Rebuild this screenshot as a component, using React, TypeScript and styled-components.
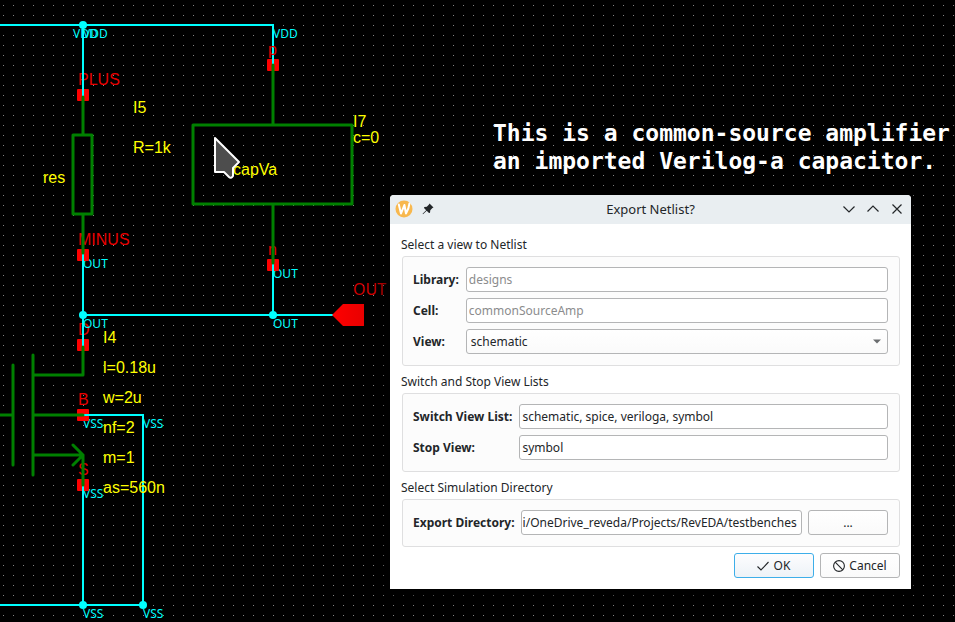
import React from "react";
import styled, { createGlobalStyle } from "styled-components";

const GlobalStyle = createGlobalStyle`
  * { box-sizing: border-box; }
  body { margin: 0; background: #000; overflow: hidden; }
`;

const Workspace = styled.main`
  position: relative;
  min-height: 100vh;
  overflow: hidden;
  background: #000;
`;

const Canvas = styled.svg`
  position: absolute;
  inset: 0;
  width: 100%;
  height: 100%;
`;

const NetLabel = styled.text`
  font: 12px "Noto Sans", sans-serif;
  fill: #00ffff;
`;

const PinLabel = styled.text<{ $port?: boolean }>`
  font: 16px ${(p) => (p.$port ? '"Noto Sans"' : '"Liberation Sans"')}, sans-serif;
  fill: ${(p) => (p.$port ? "#d00000" : "#e80000")};
`;

const PartLabel = styled.text`
  font: 16px "Liberation Sans", sans-serif;
  fill: #ffff00;
`;

const Note = styled.p`
  position: absolute;
  left: 493px;
  top: 119px;
  margin: 0;
  color: #fff;
  font: bold 23px/28px "DejaVu Sans Mono", monospace;
  white-space: pre;
`;

const Dialog = styled.section`
  position: absolute;
  left: 390px;
  right: 44px;
  top: 195px;
  background: #fff;
  border-radius: 4px 4px 0 0;
  box-shadow: 0 3px 14px 4px rgba(0, 0, 0, 0.7);
  color: #232629;
  font: 12px/18px "Noto Sans", sans-serif;
`;

const TitleBar = styled.header`
  display: grid;
  grid-template-columns: 1fr auto 1fr;
  align-items: center;
  height: 29px;
  padding: 0 5px 2px;
  background: #e9eef1;
  border-radius: 4px 4px 0 0;
`;

const Title = styled.h1`
  margin: 0;
  font-size: 13px;
  line-height: 18px;
  font-weight: 400;
`;

const TitleActions = styled.div<{ $end?: boolean }>`
  display: flex;
  align-items: center;
  justify-content: ${(p) => (p.$end ? "flex-end" : "flex-start")};
  gap: ${(p) => (p.$end ? 6 : 9)}px;
`;

const IconButton = styled.button`
  display: flex;
  padding: 0;
  border: 0;
  background: none;
  color: #232629;
`;

const Body = styled.form`
  display: flex;
  flex-direction: column;
  gap: 6px;
  padding: 11px;
`;

const GroupTitle = styled.h2`
  margin: 0;
  padding: 1px 0 2px;
  font-size: 12px;
  line-height: 18px;
  font-weight: 400;
`;

const GroupBox = styled.div<{ $browse?: boolean }>`
  display: grid;
  grid-template-columns: ${(p) => (p.$browse ? "auto 1fr 80px" : "auto 1fr")};
  gap: 6px ${(p) => (p.$browse ? 6 : 7)}px;
  align-items: center;
  margin-left: 1px;
  padding: 10px 11px 11px 10px;
  border: 1px solid #dfdfe0;
  border-radius: 3px;
  background: #fcfcfc;
`;

const Label = styled.label`
  font-weight: 700;
`;

const TextField = styled.input<{ $tight?: boolean }>`
  width: 100%;
  min-width: 0;
  height: 25px;
  padding: 0 ${(p) => (p.$tight ? 1 : 2)}px;
  border: 1px solid #b4b5b6;
  border-radius: 3px;
  background: #fff;
  color: #232629;
  font: inherit;
  outline: none;
  &:disabled { color: #8b8c8d; }
`;

const SelectWrap = styled.div`
  display: grid;
  align-items: center;
  & > * { grid-area: 1 / 1; }
  & > svg { justify-self: end; margin-right: 7px; pointer-events: none; }
`;

const Select = styled.select`
  appearance: none;
  width: 100%;
  height: 25px;
  padding: 0 4px;
  border: 1px solid #b4b5b6;
  border-radius: 3px;
  background: linear-gradient(#fff, #fafafa);
  color: #232629;
  font: inherit;
`;

const Button = styled.button<{ $primary?: boolean }>`
  display: flex;
  align-items: center;
  justify-content: center;
  gap: 4px;
  width: 80px;
  height: 25px;
  padding: 0 ${(p) => (p.$primary ? 2 : 0)}px 0 0;
  border: 1px solid ${(p) => (p.$primary ? "#3daee9" : "#b4b5b6")};
  border-radius: 3px;
  background: ${(p) => (p.$primary ? "linear-gradient(#fdfdfe, #edf2f7)" : "linear-gradient(#fff, #fafafa)")};
  color: #232629;
  font: inherit;
`;

const Actions = styled.footer`
  display: flex;
  justify-content: flex-end;
  gap: 6px;
`;

type Mark = [number, number, string];

const nets: Mark[] = [
  [73, 38, "VDD"], [83, 38, "VDD"], [273, 38, "VDD"],
  [83, 268, "OUT"], [273, 278, "OUT"], [83, 328, "OUT"], [273, 328, "OUT"],
  [83, 428, "VSS"], [143, 428, "VSS"], [83, 498, "VSS"], [83, 618, "VSS"], [143, 618, "VSS"],
];
const pinNames: Mark[] = [
  [78, 85, "PLUS"], [78, 245, "MINUS"], [268, 255, "n"],
  [78, 335, "D"], [78, 405, "B"], [78, 475, "S"],
];
const parts: Mark[] = [
  [133, 113, "I5"], [133, 153, "R=1k"], [43, 183, "res"],
  [353, 127, "I7"], [353, 143, "c=0"], [233, 175, "capVa"],
  [103, 343, "I4"], [103, 373, "l=0.18u"], [103, 403, "w=2u"],
  [103, 433, "nf=2"], [103, 463, "m=1"], [103, 493, "as=560n"],
];
const pins = [[83, 95], [83, 255], [83, 345], [83, 415], [83, 485], [273, 65], [273, 265]];
const junctions = [[83, 25], [83, 315], [273, 315], [83, 605], [143, 605]];

function Schematic() {
  return (
    <Canvas role="img" aria-label="Common-source amplifier schematic">
      <defs>
        <pattern id="grid" width="10" height="10" patternUnits="userSpaceOnUse">
          <rect x="3" y="5" width="1" height="1" fill="#858585" />
        </pattern>
        <linearGradient id="port">
          <stop offset="0" stopColor="#ff0000" />
          <stop offset="1" stopColor="#e80000" />
        </linearGradient>
      </defs>
      <rect width="100%" height="100%" fill="url(#grid)" />
      {pinNames.map(([x, y, t]) => <PinLabel key={`${x}-${y}`} x={x} y={y}>{t}</PinLabel>)}
      {nets.map(([x, y, t]) => <NetLabel key={`${x}-${y}`} x={x} y={y}>{t}</NetLabel>)}
      {pins.map(([x, y]) => <rect key={`${x}-${y}`} x={x - 6} y={y - 6} width="12" height="12" rx="1" fill="#ff0000" />)}
      <g fill="none" stroke="#00ffff" strokeWidth="2">
        <path d="M0 25H273V64M83 25V96M83 254V346M273 264V315M83 315H333" />
        <path d="M83 415H143V605M83 485V605M0 605H143" />
      </g>
      <g fill="none" stroke="#008000" strokeWidth="3" strokeLinejoin="round" strokeLinecap="round">
        <path d="M83 97V135M73 135H92V214H73ZM83 214V253" />
        <path d="M273 65V125M193 125H352V204H193ZM273 204V263" />
        <path d="M13 365V465M33 355V475M0 415H13M33 375H83V347M33 415H83M33 455H83V485M73 445L83 455L73 465" />
      </g>
      {junctions.map(([x, y]) => <circle key={`${x}-${y}`} cx={x} cy={y} r="4" fill="#00ffff" />)}
      <path d="M332 315L343 304H364V326H343Z" fill="url(#port)" />
      <PinLabel x={268} y={55}>p</PinLabel>
      <PinLabel $port x={353} y={295}>OUT</PinLabel>
      {parts.map(([x, y, t]) => <PartLabel key={`${x}-${y}`} x={x} y={y}>{t}</PartLabel>)}
      <path d="M215 138V172H224L229 177Q231 179 233 176V168L239 162Z" fill="#4d4d4d" stroke="#fff" strokeWidth="2" strokeLinejoin="round" />
    </Canvas>
  );
}

function WaylandIcon() {
  return (
    <svg width="18" height="18" viewBox="0 0 18 18" aria-hidden="true">
      <circle cx="9" cy="9" r="8.5" fill="#f8b84e" />
      <path d="M3.8 4.5L6 13.5L9.4 5L11 13.5Q13.8 9 14.4 3.6" fill="none" stroke="#fff" strokeWidth="2" strokeLinejoin="round" strokeLinecap="round" />
    </svg>
  );
}

function PinIcon() {
  return (
    <svg width="12" height="12" viewBox="0 0 12 12" aria-hidden="true">
      <path d="M7.5 0.5L11.5 4.5L10.4 5L8.3 7.2L8 9.8L7 10L4.7 7.7L1 11.2L0.6 10.8L4.2 7.2L2 5L2.3 4L4.8 3.7L7 1.6Z" fill="#232629" />
    </svg>
  );
}

function WindowIcon({ d }: { d: string }) {
  return (
    <svg width="18" height="18" viewBox="0 0 18 18" aria-hidden="true">
      <path d={d} fill="none" stroke="#232629" strokeWidth="1.2" />
    </svg>
  );
}

function ExportDialog() {
  return (
    <Dialog role="dialog" aria-labelledby="dialog-title">
      <TitleBar>
        <TitleActions>
          <WaylandIcon />
          <IconButton type="button" aria-label="Keep above"><PinIcon /></IconButton>
        </TitleActions>
        <Title id="dialog-title">Export Netlist?</Title>
        <TitleActions $end>
          <IconButton type="button" aria-label="Minimize"><WindowIcon d="M3.5 6.5L9 12L14.5 6.5" /></IconButton>
          <IconButton type="button" aria-label="Maximize"><WindowIcon d="M3.5 11.5L9 6L14.5 11.5" /></IconButton>
          <IconButton type="button" aria-label="Close"><WindowIcon d="M4.5 4.5L13.5 13.5M13.5 4.5L4.5 13.5" /></IconButton>
        </TitleActions>
      </TitleBar>
      <Body onSubmit={(e) => e.preventDefault()}>
        <div>
          <GroupTitle>Select a view to Netlist</GroupTitle>
          <GroupBox>
            <Label htmlFor="library">Library:</Label>
            <TextField id="library" defaultValue="designs" disabled />
            <Label htmlFor="cell">Cell:</Label>
            <TextField id="cell" defaultValue="commonSourceAmp" disabled />
            <Label htmlFor="view">View:</Label>
            <SelectWrap>
              <Select id="view" defaultValue="schematic"><option>schematic</option></Select>
              <svg width="8" height="5" viewBox="0 0 8 5" aria-hidden="true"><path d="M0 0.5H8L4 4.5Z" fill="#6b6d6f" /></svg>
            </SelectWrap>
          </GroupBox>
        </div>
        <div>
          <GroupTitle>Switch and Stop View Lists</GroupTitle>
          <GroupBox>
            <Label htmlFor="switch">Switch View List:</Label>
            <TextField id="switch" defaultValue="schematic, spice, veriloga, symbol" />
            <Label htmlFor="stop">Stop View:</Label>
            <TextField id="stop" defaultValue="symbol" />
          </GroupBox>
        </div>
        <div>
          <GroupTitle>Select Simulation Directory</GroupTitle>
          <GroupBox $browse>
            <Label htmlFor="directory">Export Directory:</Label>
            <TextField id="directory" $tight defaultValue="i/OneDrive_reveda/Projects/RevEDA/testbenches" />
            <Button type="button" aria-label="Browse">...</Button>
          </GroupBox>
        </div>
        <Actions>
          <Button type="submit" $primary>
            <svg width="14" height="14" viewBox="0 0 14 14" aria-hidden="true"><path d="M1.5 7.5L5 11L12.5 3" fill="none" stroke="#232629" strokeWidth="1.1" /></svg>
            OK
          </Button>
          <Button type="button">
            <svg width="12" height="12" viewBox="0 0 12 12" aria-hidden="true"><circle cx="6" cy="6" r="5.4" fill="none" stroke="#232629" strokeWidth="1.1" /><path d="M2.2 2.2L9.8 9.8" stroke="#232629" strokeWidth="1.1" /></svg>
            Cancel
          </Button>
        </Actions>
      </Body>
    </Dialog>
  );
}

export default function App() {
  return (
    <Workspace>
      <GlobalStyle />
      <Schematic />
      <Note>{"This is a common-source amplifier\nan imported Verilog-a capacitor."}</Note>
      <ExportDialog />
    </Workspace>
  );
}
